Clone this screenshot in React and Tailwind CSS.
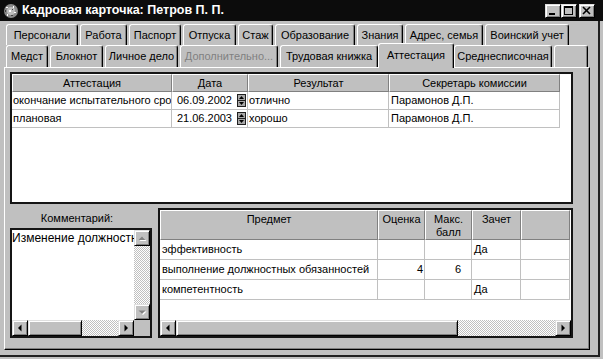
import React from 'react'

const raised = 'border border-t-[#dfdfdf] border-l-[#dfdfdf] border-r-black border-b-black shadow-[inset_1px_1px_0_#ffffff,inset_-1px_-1px_0_#808080]'
const checker = 'bg-[repeating-conic-gradient(#ffffff_0%_25%,#c0c0c0_0%_50%)] bg-[length:2px_2px]'
const headCell = 'shrink-0 bg-[#c0c0c0] border border-t-white border-l-white border-r-[#808080] border-b-[#808080]'
const cell = 'shrink-0 border-r border-b border-[#c0c0c0] flex items-center whitespace-nowrap overflow-hidden'

const tabsTop = [
  { label: 'Персонали', w: 'w-[72px]' },
  { label: 'Работа', w: 'w-[47px]' },
  { label: 'Паспорт', w: 'w-[52px]' },
  { label: 'Отпуска', w: 'w-[53px]' },
  { label: 'Стаж', w: 'w-[35px]' },
  { label: 'Образование', w: 'w-[80px]' },
  { label: 'Знания', w: 'w-[46px]' },
  { label: 'Адрес, семья', w: 'w-[78px]' },
  { label: 'Воинский учет', w: 'w-[84px]' },
]

const tabsBottom = [
  { label: 'Медст', w: 'w-[42px]' },
  { label: 'Блокнот', w: 'w-[53px]' },
  { label: 'Личное дело', w: 'w-[73px]' },
  { label: 'Дополнительно...', w: 'w-[98px]', disabled: true },
  { label: 'Трудовая книжка', w: 'w-[98px]' },
  { label: 'Аттестация', w: 'w-[76px]', active: true },
  { label: 'Среднесписочная', w: 'w-[98px]' },
  { label: '', w: 'w-[34px]' },
]

const attCols = [
  { label: 'Аттестация', w: 'w-[160px]' },
  { label: 'Дата', w: 'w-[76px]' },
  { label: 'Результат', w: 'w-[141px]' },
  { label: 'Секретарь комиссии', w: 'w-[171px]' },
]

const attRows = [
  { kind: 'окончание испытательного срока', date: '06.09.2002', result: 'отлично', who: 'Парамонов Д.П.' },
  { kind: 'плановая', date: '21.06.2003', result: 'хорошо', who: 'Парамонов Д.П.' },
]

const subjRows = [
  { name: 'эффективность', mark: '', max: '', pass: 'Да' },
  { name: 'выполнение должностных обязанностей', mark: '4', max: '6', pass: '' },
  { name: 'компетентность', mark: '', max: '', pass: 'Да' },
]

function Tab({ label, w, disabled, active }) {
  if (active) {
    return (
      <div className={`${w} -mx-[2px] -mb-px h-[25px] relative z-10 shrink-0 bg-[#c0c0c0] rounded-t-[3px] border-t border-l border-r border-t-white border-l-white border-r-black shadow-[inset_-1px_0_0_#808080] flex items-center justify-center pb-[2px]`}>
        {label}
      </div>
    )
  }
  return (
    <div className={`${w} h-full shrink-0 rounded-t-[3px] border-t border-l border-r border-t-white border-l-white border-r-black shadow-[inset_-1px_0_0_#808080] flex items-center justify-center ${disabled ? 'text-[#808080]' : ''}`}>
      {label}
    </div>
  )
}

function ScrollBtn({ dir, disabled }) {
  const pts = {
    up: '3.5,9 7,5.5 10.5,9',
    down: '3.5,5.5 7,9 10.5,5.5',
    left: '8.5,3.5 5,7 8.5,10.5',
    right: '5.5,3.5 9,7 5.5,10.5',
  }[dir]
  return (
    <div className={`w-[16px] h-[16px] shrink-0 bg-[#c0c0c0] ${raised} flex items-center justify-center`}>
      <svg width="14" height="14" viewBox="0 0 14 14">
        {disabled && <polygon points={pts} fill="#ffffff" transform="translate(1,1)" />}
        <polygon points={pts} fill={disabled ? '#808080' : '#000000'} />
      </svg>
    </div>
  )
}

function Spin() {
  return (
    <svg width="9" height="13" viewBox="0 0 9 13" className="shrink-0">
      <rect x="0.5" y="0.5" width="8" height="12" fill="#a8a8a8" stroke="#202020" />
      <line x1="0" y1="6.5" x2="9" y2="6.5" stroke="#202020" />
      <polygon points="2,5 4.5,2 7,5" fill="#000000" />
      <polygon points="2,8 4.5,11 7,8" fill="#000000" />
    </svg>
  )
}

function AppIcon() {
  return (
    <svg width="16" height="16" viewBox="0 0 16 16" className="shrink-0">
      <circle cx="8" cy="8" r="7" fill="#8a8a8a" />
      <circle cx="8" cy="8" r="4" fill="#bdbdbd" />
      <rect x="3" y="4" width="2" height="1" fill="#ffffff" />
      <rect x="10" y="3" width="1" height="2" fill="#ffffff" />
      <rect x="6" y="7" width="2" height="2" fill="#ffffff" />
      <rect x="11" y="9" width="2" height="1" fill="#ffffff" />
      <rect x="4" y="11" width="1" height="2" fill="#ffffff" />
      <rect x="8" y="12" width="2" height="1" fill="#404040" />
      <rect x="2" y="7" width="1" height="2" fill="#404040" />
      <rect x="9" y="6" width="1" height="1" fill="#404040" />
    </svg>
  )
}

function CaptionBtn({ kind, className = '' }) {
  return (
    <div className={`w-[16px] h-[14px] bg-[#c0c0c0] ${raised} flex items-center justify-center ${className}`}>
      <svg width="14" height="12" viewBox="0 0 14 12">
        {kind === 'min' && <rect x="3" y="8" width="6" height="2" fill="#000000" />}
        {kind === 'max' && (
          <g fill="none" stroke="#000000">
            <rect x="2.5" y="1.5" width="8" height="8" />
            <line x1="2" y1="2.5" x2="11" y2="2.5" />
          </g>
        )}
        {kind === 'close' && (
          <g stroke="#000000" strokeWidth="1.6">
            <line x1="3" y1="2" x2="10" y2="9" />
            <line x1="10" y1="2" x2="3" y2="9" />
          </g>
        )}
      </svg>
    </div>
  )
}

export default function App() {
  return (
    <div className="w-[603px] h-[359px] bg-[#c0c0c0] overflow-hidden font-['Liberation_Sans',Arial,sans-serif] text-[11px] text-black">
      {/* Caption */}
      <div className="h-[21px] bg-[#0c0c0c] flex items-center pl-[3px] pr-[8px]">
        <AppIcon />
        <span className="ml-[3px] text-white font-bold text-[12.5px]">Кадровая карточка: Петров П. П.</span>
        <div className="ml-auto flex items-center">
          <CaptionBtn kind="min" />
          <CaptionBtn kind="max" />
          <CaptionBtn kind="close" className="ml-[2px]" />
        </div>
      </div>

      {/* Window body */}
      <div className="w-[600px] h-[336px] border-r-2 border-b-2 border-[#202020] pt-[3px]">
        <div className="flex gap-[2px] h-[21px] pl-[6px]">
          {tabsTop.map((t) => <Tab key={t.label} {...t} />)}
        </div>
        <div className="flex items-end gap-[2px] h-[22px] pl-[6px]">
          {tabsBottom.map((t, i) => <Tab key={i} {...t} />)}
        </div>

        {/* Tab sheet */}
        <div className="ml-[4px] w-[586px] h-[283px] border border-t-white border-l-white border-r-black border-b-black shadow-[inset_-1px_-1px_0_#808080] pl-[5px] pt-[4px]">
          {/* Attestation grid */}
          <div className="w-[563px] h-[132px] border-2 border-[#151515] bg-white overflow-hidden">
            <div className="flex">
              {attCols.map((c) => (
                <div key={c.label} className={`${c.w} h-[18px] ${headCell} flex items-center justify-center`}>{c.label}</div>
              ))}
            </div>
            {attRows.map((r) => (
              <div key={r.date} className="flex">
                <div className={`w-[160px] h-[18px] ${cell} pl-[1px]`}>{r.kind}</div>
                <div className={`w-[76px] h-[18px] ${cell} justify-end gap-[5px] pr-[1px]`}>
                  <span>{r.date}</span>
                  <Spin />
                </div>
                <div className={`w-[141px] h-[18px] ${cell} pl-[1px]`}>{r.result}</div>
                <div className={`w-[171px] h-[18px] ${cell} pl-[2px]`}>{r.who}</div>
              </div>
            ))}
          </div>

          <div className="flex mt-[4px]">
            {/* Comment */}
            <div className="w-[142px] flex flex-col">
              <div className="h-[20px] flex items-center justify-center pr-[8px]">Комментарий:</div>
              <div className="h-[110px] border-2 border-[#151515] bg-white flex flex-col">
                <div className="flex flex-1 min-h-0">
                  <div className="flex-1 overflow-hidden whitespace-nowrap pt-[1px] text-[12px] leading-[14px]">Изменение должностных обязанностей</div>
                  <div className="w-[16px] flex flex-col">
                    <ScrollBtn dir="up" disabled />
                    <div className={`flex-1 ${checker}`} />
                    <ScrollBtn dir="down" disabled />
                  </div>
                </div>
                <div className="h-[16px] flex">
                  <ScrollBtn dir="left" />
                  <div className={`w-[54px] h-[16px] bg-[#c0c0c0] ${raised}`} />
                  <div className={`flex-1 ${checker}`} />
                  <ScrollBtn dir="right" />
                  <div className="w-[16px] bg-[#c0c0c0]" />
                </div>
              </div>
            </div>

            {/* Subjects grid */}
            <div className="ml-[6px] w-[415px] h-[130px] border-2 border-[#151515] bg-white flex flex-col">
              <div className="flex">
                <div className={`w-[218px] h-[30px] ${headCell} text-center pt-[2px] leading-[13px]`}>Предмет</div>
                <div className={`w-[47px] h-[30px] ${headCell} text-center pt-[2px] leading-[13px]`}>Оценка</div>
                <div className={`w-[47px] h-[30px] ${headCell} text-center pt-[2px] leading-[13px]`}>Макс.<br />балл</div>
                <div className={`w-[49px] h-[30px] ${headCell} text-center pt-[2px] leading-[13px]`}>Зачет</div>
                <div className={`w-[49px] h-[30px] ${headCell}`} />
              </div>
              {subjRows.map((r) => (
                <div key={r.name} className="flex">
                  <div className={`w-[218px] h-[20px] ${cell} pl-[2px]`}>{r.name}</div>
                  <div className={`w-[47px] h-[20px] ${cell} justify-end pr-[1px]`}>{r.mark}</div>
                  <div className={`w-[47px] h-[20px] ${cell} justify-end pr-[10px]`}>{r.max}</div>
                  <div className={`w-[49px] h-[20px] ${cell} pl-[2px]`}>{r.pass}</div>
                  <div className={`w-[49px] h-[20px] ${cell}`} />
                </div>
              ))}
              <div className="flex-1" />
              <div className="h-[16px] flex">
                <ScrollBtn dir="left" />
                <div className={`w-[282px] h-[16px] bg-[#c0c0c0] ${raised}`} />
                <div className={`flex-1 ${checker}`} />
                <ScrollBtn dir="right" />
              </div>
            </div>
          </div>
        </div>
      </div>
    </div>
  )
}
